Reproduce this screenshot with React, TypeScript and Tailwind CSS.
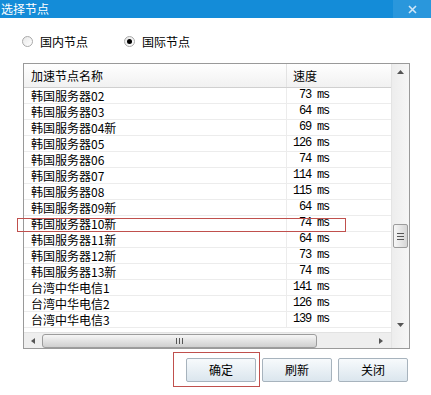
import React from 'react'

const rows = [
    { name: '韩国服务器02', ms: '73 ms' },
    { name: '韩国服务器03', ms: '64 ms' },
    { name: '韩国服务器04新', ms: '69 ms' },
    { name: '韩国服务器05', ms: '126 ms' },
    { name: '韩国服务器06', ms: '74 ms' },
    { name: '韩国服务器07', ms: '114 ms' },
    { name: '韩国服务器08', ms: '115 ms' },
    { name: '韩国服务器09新', ms: '64 ms' },
    { name: '韩国服务器10新', ms: '74 ms' },
    { name: '韩国服务器11新', ms: '64 ms' },
    { name: '韩国服务器12新', ms: '73 ms' },
    { name: '韩国服务器13新', ms: '74 ms' },
    { name: '台湾中华电信1', ms: '141 ms' },
    { name: '台湾中华电信2', ms: '126 ms' },
    { name: '台湾中华电信3', ms: '139 ms' },
]

const cjk = "font-['Noto_Sans_CJK_SC',sans-serif]"

function Radio({ checked, label }: { checked?: boolean; label: string }) {
    return (
        <div className="flex items-center gap-[7px]">
            <span className="w-[11px] h-[11px] rounded-full border border-[#a9a9a9] bg-gradient-to-br from-[#e8e8e8] to-white flex items-center justify-center">
                {checked && <span className="w-[5px] h-[5px] rounded-full bg-black" />}
            </span>
            <span className="text-[12px] leading-none text-black">{label}</span>
        </div>
    )
}

function Button({ label }: { label: string }) {
    return (
        <button className="w-[70px] h-[24px] border border-[#a7b3bd] rounded-[2px] bg-gradient-to-b from-[#f7fafc] to-[#dbe6ee] text-[12px] text-black leading-none">
            {label}
        </button>
    )
}

export default function App() {
    return (
        <div className={`relative w-[431px] h-[395px] bg-white overflow-hidden ${cjk}`}>
            {/* title bar */}
            <div className="h-[18px] bg-[#148cd8] flex items-center justify-between">
                <span className="text-white text-[12px] leading-none pl-[1px]">选择节点</span>
                <div className="w-[38px] h-full bg-[#2a97dc] flex items-center justify-center">
                    <svg width="9" height="9" viewBox="0 0 9 9">
                        <path d="M1 1 L8 8 M8 1 L1 8" stroke="#cfe6f7" strokeWidth="1.6" />
                    </svg>
                </div>
            </div>

            {/* radios */}
            <div className="h-[45px] flex items-center pl-[22px] pt-[2px]">
                <Radio label="国内节点" />
                <div className="ml-[36px]">
                    <Radio checked label="国际节点" />
                </div>
            </div>

            {/* list box */}
            <div className="ml-[23px] w-[387px] h-[286px] border border-[#9a9a9a] flex">
                <div className="w-[367px] flex flex-col">
                    <div className="h-[268px] overflow-hidden">
                        <div className="h-[24px] flex border-b border-[#d0d0d0] bg-gradient-to-b from-white to-[#f1f1f1] text-[12px] text-black">
                            <div className="w-[262px] pl-[7px] flex items-center">加速节点名称</div>
                            <div className="flex-1 border-l border-[#e3e3e3] pl-[6px] flex items-center">速度</div>
                        </div>
                        {rows.map((r) => (
                            <div key={r.name} className="h-[16px] flex border-b border-[#ececec] text-[12px] leading-[15px] text-black">
                                <div className="w-[262px] pl-[7px] whitespace-nowrap">{r.name}</div>
                                <div className="flex-1 border-l border-[#ececec]">
                                    <span className="block w-[42px] text-right font-['Liberation_Mono',monospace] text-[12px] tracking-[-1.2px]">
                                        {r.ms}
                                    </span>
                                </div>
                            </div>
                        ))}
                    </div>
                    {/* horizontal scrollbar */}
                    <div className="h-[16px] bg-[#eeeeee] border-t border-[#e2e2e2] flex items-center">
                        <div className="w-[18px] flex justify-center">
                            <svg width="4" height="6" viewBox="0 0 4 6"><path d="M4 0 L0 3 L4 6Z" fill="#555" /></svg>
                        </div>
                        <div className="w-[275px] h-[14px] rounded-[3px] border border-[#9c9c9c] bg-gradient-to-b from-[#f6f6f6] to-[#cfcfcf] flex items-center justify-center gap-[2px]">
                            <span className="w-px h-[6px] bg-[#555]" />
                            <span className="w-px h-[6px] bg-[#555]" />
                            <span className="w-px h-[6px] bg-[#555]" />
                        </div>
                        <div className="flex-1 flex justify-end pr-[8px]">
                            <svg width="4" height="6" viewBox="0 0 4 6"><path d="M0 0 L4 3 L0 6Z" fill="#555" /></svg>
                        </div>
                    </div>
                </div>
                {/* vertical scrollbar */}
                <div className="flex-1 bg-gradient-to-r from-[#ededed] to-[#f6f6f6] border-l border-[#e4e4e4] flex flex-col items-center">
                    <div className="h-[16px] flex items-center">
                        <svg width="7" height="4" viewBox="0 0 7 4"><path d="M0 4 L3.5 0 L7 4Z" fill="#555" /></svg>
                    </div>
                    <div className="mt-[144px] w-[15px] h-[24px] rounded-[2px] border border-[#9c9c9c] bg-gradient-to-r from-[#f7f7f7] to-[#d6d6d6] flex flex-col items-center justify-center gap-[2px]">
                        <span className="w-[7px] h-px bg-[#555]" />
                        <span className="w-[7px] h-px bg-[#555]" />
                        <span className="w-[7px] h-px bg-[#555]" />
                    </div>
                    <div className="mt-auto mb-[21px]">
                        <svg width="7" height="4" viewBox="0 0 7 4"><path d="M0 0 L3.5 4 L7 0Z" fill="#555" /></svg>
                    </div>
                </div>
            </div>

            {/* buttons */}
            <div className="mt-[9px] pl-[186px] flex gap-[6px]">
                <Button label="确定" />
                <Button label="刷新" />
                <Button label="关闭" />
            </div>

            {/* red annotation boxes */}
            <div className="absolute left-[17px] top-[218px] w-[329px] h-[14px] border border-[#c0504d]" />
            <div className="absolute left-[173px] top-[352px] w-[87px] h-[35px] border border-[#c0504d]" />
        </div>
    )
}
